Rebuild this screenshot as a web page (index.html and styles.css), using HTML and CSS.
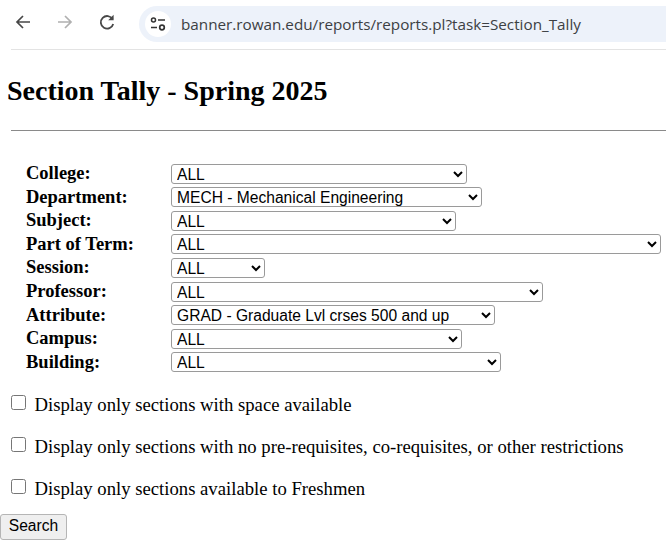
FILE: index.html
```html
<!DOCTYPE html>
<html lang="en">
<head>
<meta charset="utf-8">
<title>Section Tally</title>
<link rel="stylesheet" href="styles.css">
</head>
<body>
<header class="toolbar">
  <svg class="nav" width="18" height="18" viewBox="0 0 18 18"><path d="M16 9H3M9 3L3 9l6 6" fill="none" stroke="#474747" stroke-width="1.7"/></svg>
  <svg class="nav" width="18" height="18" viewBox="0 0 18 18"><path d="M2 9h13M9 3l6 6-6 6" fill="none" stroke="#b0b0b0" stroke-width="1.7"/></svg>
  <svg class="nav" width="18" height="18" viewBox="0 0 18 18"><path d="M14.6 6.2A6.3 6.3 0 1 0 15.2 11" fill="none" stroke="#474747" stroke-width="1.8"/><path d="M15.6 1.8v5.4h-5.4z" fill="#474747"/></svg>
  <div class="omnibox">
    <span class="site-icon"><svg width="18" height="18" viewBox="0 0 18 18"><circle cx="4.5" cy="5" r="2" fill="none" stroke="#333" stroke-width="1.5"/><path d="M9 5h7M2 12.500h6" stroke="#333" stroke-width="1.6"/><circle cx="13" cy="12.500" r="2.300" fill="none" stroke="#333" stroke-width="1.7"/></svg></span>
    <span class="url">banner.rowan.edu/reports/reports.pl?task=Section_Tally</span>
  </div>
</header>
<main>
  <h1>Section Tally - Spring 2025</h1>
  <hr>
  <form>
    <div class="fields">
      <label>College:</label><select class="w-college"><option>ALL</option></select>
      <label>Department:</label><select class="w-dept"><option>MECH - Mechanical Engineering</option></select>
      <label>Subject:</label><select class="w-subject"><option>ALL</option></select>
      <label>Part of Term:</label><select class="w-term"><option>ALL</option></select>
      <label>Session:</label><select class="w-session"><option>ALL</option></select>
      <label>Professor:</label><select class="w-prof"><option>ALL</option></select>
      <label>Attribute:</label><select class="w-attr"><option>GRAD - Graduate Lvl crses 500 and up</option></select>
      <label>Campus:</label><select class="w-campus"><option>ALL</option></select>
      <label>Building:</label><select class="w-building"><option>ALL</option></select>
    </div>
    <div class="checks">
      <label class="check"><input type="checkbox"> Display only sections with space available</label>
      <label class="check"><input type="checkbox"> Display only sections with no pre-requisites, co-requisites, or other restrictions</label>
      <label class="check"><input type="checkbox"> Display only sections available to Freshmen</label>
    </div>
    <button type="button" class="search">Search</button>
  </form>
</main>
</body>
</html>
```
FILE: styles.css
```css
html, body { margin: 0; padding: 0; background: #fff; overflow: hidden; }
body { width: 666px; height: 553px; font-family: "Liberation Serif", serif; color: #000; }

.toolbar {
  height: 50px;
  box-sizing: border-box;
  margin-left: 11px;
  padding: 6px 0 0 3px;
  border-bottom: 1px solid #e3e3e3;
  display: flex;
  align-items: flex-start;
  gap: 24px;
}
.nav { margin-top: 7px; flex: none; }
.omnibox {
  flex: 1;
  margin-left: -1px;
  height: 36px;
  background: #edf2fa;
  border-radius: 18px 0 0 18px;
  display: flex;
  align-items: center;
  padding-left: 6px;
  gap: 10px;
}
.site-icon {
  width: 26px; height: 26px; border-radius: 50%; background: #fff;
  display: flex; align-items: center; justify-content: center;
}
.url { font-family: "Open Sans", sans-serif; font-size: 15.25px; color: #3c4043; white-space: nowrap; }

main { padding-left: 7px; }
h1 { margin: 0; padding-top: 25px; font-size: 28px; line-height: 32px; font-weight: bold; }
hr { margin: 23px 0 0 4px; border: 0; border-top: 1px solid #8a8a8a; height: 0; }

.fields {
  margin: 31px 0 0 19px;
  display: grid;
  grid-template-columns: 145px 1fr;
  grid-auto-rows: 23.55px;
  align-items: center;
  justify-items: start;
}
.fields label { font-weight: bold; font-size: 18.5px; }
select {
  height: 20px;
  box-sizing: border-box;
  font-family: "Liberation Sans", sans-serif;
  font-size: 15.6px;
  color: #000;
  background: #fff;
  border: 1px solid #9a9a9a;
  border-radius: 3px;
  padding: 0 0 0 1px;
}
.w-college { width: 296px; }
.w-dept { width: 311px; }
.w-subject { width: 285px; }
.w-term { width: 490px; }
.w-session { width: 94px; }
.w-prof { width: 372px; }
.w-attr { width: 324px; }
.w-campus { width: 291px; }
.w-building { width: 330px; }

.checks { margin: 19px 0 0 4px; display: flex; flex-direction: column; gap: 19px; }
.check { display: flex; align-items: center; font-size: 18.700px; line-height: 23px; gap: 8.5px; }
.check input { margin: 0 0 3px 0; width: 15px; height: 15px; flex: none; }

.search {
  display: block;
  margin: 14px 0 0 -7px;
  width: 67px;
  height: 26px;
  padding: 0 0 2px;
  font-family: "Liberation Sans", sans-serif;
  font-size: 15.6px;
  color: #000;
  background: #efefef;
  border: 1px solid #b5b5b5;
  border-radius: 3px;
}
```
